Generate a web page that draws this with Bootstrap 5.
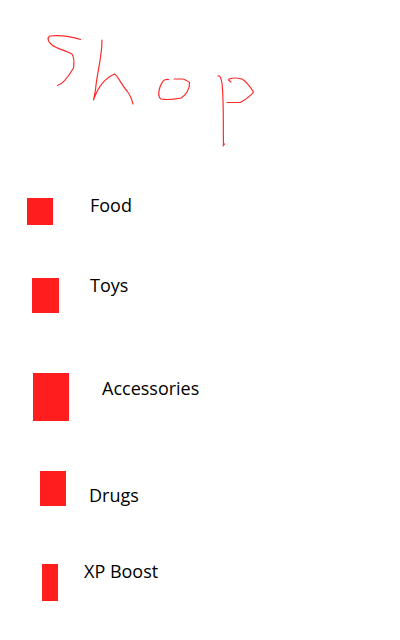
<!DOCTYPE html>
<html lang="en">
<head>
<meta charset="utf-8">
<meta name="viewport" content="width=device-width, initial-scale=1">
<title>Shop</title>
<link href="https://cdn.jsdelivr.net/npm/bootstrap@5.3.0/dist/css/bootstrap.min.css" rel="stylesheet">
<style>
body { font-family: "Open Sans", "Noto Sans", sans-serif; color: #000; background: #fff; }
.shop-title { height: 198px; }
.shop-title svg { display: block; width: 270px; height: 160px; fill: none; stroke: #ff2a2a; stroke-width: 1.2; stroke-linecap: round; stroke-linejoin: round; }
.shop-item span:last-child { font-size: 18px; line-height: 14px; }
.swatch { background: #ff1d1d; flex: none; }
.food { padding-left: 27px; gap: 37px; margin-bottom: 53px; }
.food .swatch { width: 26px; height: 27px; }
.toys { padding-left: 32px; gap: 31px; margin-bottom: 60px; }
.toys .swatch { width: 27px; height: 35px; }
.accessories { padding-left: 33px; gap: 33px; margin-bottom: 50px; }
.accessories .swatch { width: 36px; height: 48px; }
.drugs { padding-left: 40px; gap: 23px; margin-bottom: 58px; }
.drugs .swatch { width: 26px; height: 35px; }
.boost { padding-left: 42px; gap: 26px; }
.boost .swatch { width: 16px; height: 37px; }
</style>
</head>
<body>
<main>
  <h1 class="shop-title m-0">
    <!-- pen-stroke lettering -->
    <svg viewBox="0 0 270 160" role="img" aria-label="Shop">
      <path d="M80.500 39.500C73 37 61 35 49.500 36C47 38 48 42 52 45C57 49 65 50 72 54C75 59 74 64 73.500 68C70 74 63 84 57.500 85.500"/>
      <path d="M102 40C102 58 97 72 95.500 90L93.500 100C98 87 105 78 114.500 74C118 76 121 84 127 91C131 96 132 100 133 104"/>
      <path d="M168.500 79.500C163 79 162 82 160 87C158 93 158 97 161 99C167 100 176 99 181 98C186 95 190 89 189.500 82.500C188 81 184 79 182 79H174"/>
      <path d="M218 76C220 75 221 78 222 83C224 103 223 124 223.500 145M223 146L224.500 144"/>
      <path d="M231 82L228.500 80C230 77 238 78 242 79C247 82 251 88 253.500 92C251 96 246 99 240.500 102.500H227"/>
    </svg>
  </h1>
  <ul class="list-unstyled m-0">
    <li class="shop-item food d-flex align-items-start"><span class="swatch"></span><span>Food</span></li>
    <li class="shop-item toys d-flex align-items-start"><span class="swatch"></span><span>Toys</span></li>
    <li class="shop-item accessories d-flex align-items-start"><span class="swatch"></span><span class="pt-2">Accessories</span></li>
    <li class="shop-item drugs d-flex align-items-end"><span class="swatch"></span><span class="pb-1">Drugs</span></li>
    <li class="shop-item boost d-flex align-items-start"><span class="swatch"></span><span>XP Boost</span></li>
  </ul>
</main>
<script src="https://cdn.jsdelivr.net/npm/bootstrap@5.3.0/dist/js/bootstrap.bundle.min.js"></script>
</body>
</html>
